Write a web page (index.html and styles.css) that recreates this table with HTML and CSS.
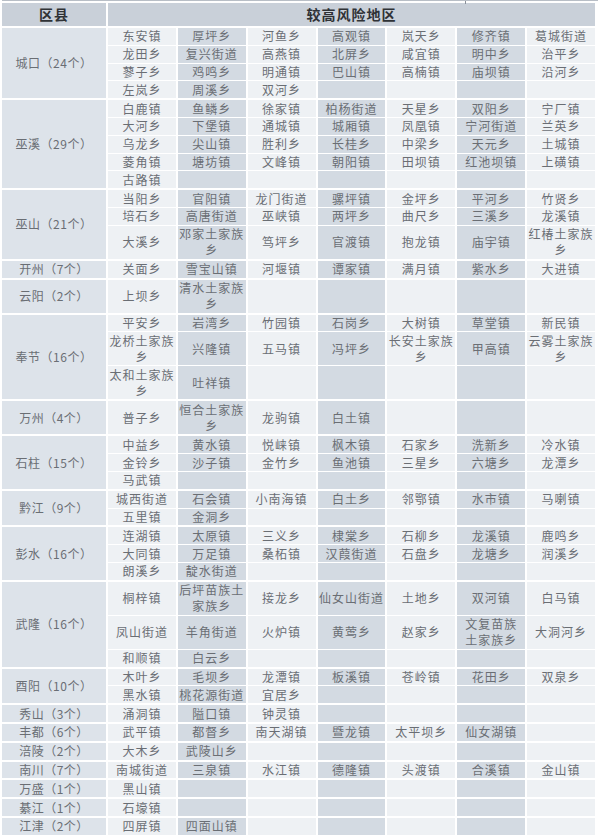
FILE: index.html
```html
<!DOCTYPE html>
<html lang="zh">
<head>
<meta charset="utf-8">
<title>较高风险地区</title>
<link rel="stylesheet" href="styles.css">
</head>
<body>
<div class="topline"><span class="tick"></span></div>
<table class="risk">
<colgroup>
<col class="c-dist"><col class="c-a"><col class="c-b"><col class="c-a"><col class="c-b"><col class="c-a"><col class="c-b"><col class="c-a">
</colgroup>
<thead>
<tr><th>区县</th><th colspan="7">较高风险地区</th></tr>
</thead>
<tbody>
<tr class="grp"><td class="dist" rowspan="4">城口（24个）</td><td>东安镇</td><td>厚坪乡</td><td>河鱼乡</td><td>高观镇</td><td>岚天乡</td><td>修齐镇</td><td>葛城街道</td></tr>
<tr><td>龙田乡</td><td>复兴街道</td><td>高燕镇</td><td>北屏乡</td><td>咸宜镇</td><td>明中乡</td><td>治平乡</td></tr>
<tr><td>蓼子乡</td><td>鸡鸣乡</td><td>明通镇</td><td>巴山镇</td><td>高楠镇</td><td>庙坝镇</td><td>沿河乡</td></tr>
<tr><td>左岚乡</td><td>周溪乡</td><td>双河乡</td><td></td><td></td><td></td><td></td></tr>

<tr class="grp"><td class="dist" rowspan="5">巫溪（29个）</td><td>白鹿镇</td><td>鱼鳞乡</td><td>徐家镇</td><td>柏杨街道</td><td>天星乡</td><td>双阳乡</td><td>宁厂镇</td></tr>
<tr><td>大河乡</td><td>下堡镇</td><td>通城镇</td><td>城厢镇</td><td>凤凰镇</td><td>宁河街道</td><td>兰英乡</td></tr>
<tr><td>乌龙乡</td><td>尖山镇</td><td>胜利乡</td><td>长桂乡</td><td>中梁乡</td><td>天元乡</td><td>土城镇</td></tr>
<tr><td>菱角镇</td><td>塘坊镇</td><td>文峰镇</td><td>朝阳镇</td><td>田坝镇</td><td>红池坝镇</td><td>上磺镇</td></tr>
<tr><td>古路镇</td><td></td><td></td><td></td><td></td><td></td><td></td></tr>

<tr class="grp"><td class="dist" rowspan="3">巫山（21个）</td><td>当阳乡</td><td>官阳镇</td><td>龙门街道</td><td>骡坪镇</td><td>金坪乡</td><td>平河乡</td><td>竹贤乡</td></tr>
<tr><td>培石乡</td><td>高唐街道</td><td>巫峡镇</td><td>两坪乡</td><td>曲尺乡</td><td>三溪乡</td><td>龙溪镇</td></tr>
<tr class="tall"><td>大溪乡</td><td>邓家土家族<br>乡</td><td>笃坪乡</td><td>官渡镇</td><td>抱龙镇</td><td>庙宇镇</td><td>红椿土家族<br>乡</td></tr>

<tr class="grp"><td class="dist">开州（7个）</td><td>关面乡</td><td>雪宝山镇</td><td>河堰镇</td><td>谭家镇</td><td>满月镇</td><td>紫水乡</td><td>大进镇</td></tr>

<tr class="grp tall"><td class="dist">云阳（2个）</td><td>上坝乡</td><td>清水土家族<br>乡</td><td></td><td></td><td></td><td></td><td></td></tr>

<tr class="grp"><td class="dist" rowspan="3">奉节（16个）</td><td>平安乡</td><td>岩湾乡</td><td>竹园镇</td><td>石岗乡</td><td>大树镇</td><td>草堂镇</td><td>新民镇</td></tr>
<tr class="tall"><td>龙桥土家族<br>乡</td><td>兴隆镇</td><td>五马镇</td><td>冯坪乡</td><td>长安土家族<br>乡</td><td>甲高镇</td><td>云雾土家族<br>乡</td></tr>
<tr class="tall"><td>太和土家族<br>乡</td><td>吐祥镇</td><td></td><td></td><td></td><td></td><td></td></tr>

<tr class="grp tall"><td class="dist">万州（4个）</td><td>普子乡</td><td>恒合土家族<br>乡</td><td>龙驹镇</td><td>白土镇</td><td></td><td></td><td></td></tr>

<tr class="grp"><td class="dist" rowspan="3">石柱（15个）</td><td>中益乡</td><td>黄水镇</td><td>悦崃镇</td><td>枫木镇</td><td>石家乡</td><td>洗新乡</td><td>冷水镇</td></tr>
<tr><td>金铃乡</td><td>沙子镇</td><td>金竹乡</td><td>鱼池镇</td><td>三星乡</td><td>六塘乡</td><td>龙潭乡</td></tr>
<tr><td>马武镇</td><td></td><td></td><td></td><td></td><td></td><td></td></tr>

<tr class="grp"><td class="dist" rowspan="2">黔江（9个）</td><td>城西街道</td><td>石会镇</td><td>小南海镇</td><td>白土乡</td><td>邻鄂镇</td><td>水市镇</td><td>马喇镇</td></tr>
<tr><td>五里镇</td><td>金洞乡</td><td></td><td></td><td></td><td></td><td></td></tr>

<tr class="grp"><td class="dist" rowspan="3">彭水（16个）</td><td>连湖镇</td><td>太原镇</td><td>三义乡</td><td>棣棠乡</td><td>石柳乡</td><td>龙溪镇</td><td>鹿鸣乡</td></tr>
<tr><td>大同镇</td><td>万足镇</td><td>桑柘镇</td><td>汉葭街道</td><td>石盘乡</td><td>龙塘乡</td><td>润溪乡</td></tr>
<tr><td>朗溪乡</td><td>靛水街道</td><td></td><td></td><td></td><td></td><td></td></tr>

<tr class="grp tall"><td class="dist" rowspan="3">武隆（16个）</td><td>桐梓镇</td><td>后坪苗族土<br>家族乡</td><td>接龙乡</td><td>仙女山街道</td><td>土地乡</td><td>双河镇</td><td>白马镇</td></tr>
<tr class="tall"><td>凤山街道</td><td>羊角街道</td><td>火炉镇</td><td>黄莺乡</td><td>赵家乡</td><td>文复苗族<br>土家族乡</td><td>大洞河乡</td></tr>
<tr><td>和顺镇</td><td>白云乡</td><td></td><td></td><td></td><td></td><td></td></tr>

<tr class="grp"><td class="dist" rowspan="2">酉阳（10个）</td><td>木叶乡</td><td>毛坝乡</td><td>龙潭镇</td><td>板溪镇</td><td>苍岭镇</td><td>花田乡</td><td>双泉乡</td></tr>
<tr><td>黑水镇</td><td>桃花源街道</td><td>宜居乡</td><td></td><td></td><td></td><td></td></tr>

<tr class="grp"><td class="dist">秀山（3个）</td><td>涌洞镇</td><td>隘口镇</td><td>钟灵镇</td><td></td><td></td><td></td><td></td></tr>
<tr class="grp"><td class="dist">丰都（6个）</td><td>武平镇</td><td>都督乡</td><td>南天湖镇</td><td>暨龙镇</td><td>太平坝乡</td><td>仙女湖镇</td><td></td></tr>
<tr class="grp"><td class="dist">涪陵（2个）</td><td>大木乡</td><td>武陵山乡</td><td></td><td></td><td></td><td></td><td></td></tr>
<tr class="grp"><td class="dist">南川（7个）</td><td>南城街道</td><td>三泉镇</td><td>水江镇</td><td>德隆镇</td><td>头渡镇</td><td>合溪镇</td><td>金山镇</td></tr>
<tr class="grp"><td class="dist">万盛（1个）</td><td>黑山镇</td><td></td><td></td><td></td><td></td><td></td><td></td></tr>
<tr class="grp"><td class="dist">綦江（1个）</td><td>石壕镇</td><td></td><td></td><td></td><td></td><td></td><td></td></tr>
<tr class="grp"><td class="dist">江津（2个）</td><td>四屏镇</td><td>四面山镇</td><td></td><td></td><td></td><td></td><td></td></tr>
</tbody>
</table>
</body>
</html>
```

FILE: styles.css
```css
html, body {
  margin: 0;
  padding: 0;
  background: #ffffff;
}
body {
  width: 600px;
  font-family: "Noto Sans CJK SC", "Noto Sans", sans-serif;
}
.topline {
  position: relative;
  height: 2px;
  border-top: 1px solid #b8bec6;
  margin: 0 2px;
}
.tick {
  position: absolute;
  left: 463px;
  top: 0;
  width: 1px;
  height: 3px;
  background: #8a9099;
}
.risk {
  margin-left: 2px;
  width: 595px;
  border-collapse: separate;
  border-spacing: 0;
  table-layout: fixed;
  font-size: 12px;
  color: #6a6e74;
}
.c-dist { width: 106px; }
.risk th {
  box-sizing: content-box;
  background: #c9d0d9;
  color: #2f3236;
  font-weight: bold;
  font-size: 14px;
  letter-spacing: 1px;
  height: 23px;
  padding: 0;
  border-right: 2px solid #fff;
  border-bottom: 1px solid #fff;
  line-height: 23px;
}
.risk td {
  box-sizing: content-box;
  height: 16.8px;
  padding: 0;
  line-height: 16px;
  text-align: center;
  vertical-align: middle;
  border-right: 2px solid #fff;
  border-bottom: 1px solid #fff;
  letter-spacing: 1px;
  white-space: nowrap;
}
.risk tr.tall td {
  height: 33px;
}
.risk tr.grp td { border-top: 1px solid #fff; }
.risk td:nth-child(even) { background: #eef1f4; }
.risk td:nth-child(odd) { background: #d3dae2; }
.risk tr:not(.grp) td:nth-child(odd) { background: #eef1f4; }
.risk tr:not(.grp) td:nth-child(even) { background: #d3dae2; }
.risk td.dist {
  background: #dde3ea;
  color: #6a6e74;
  font-size: 12px;
  letter-spacing: 0.5px;
}
```
